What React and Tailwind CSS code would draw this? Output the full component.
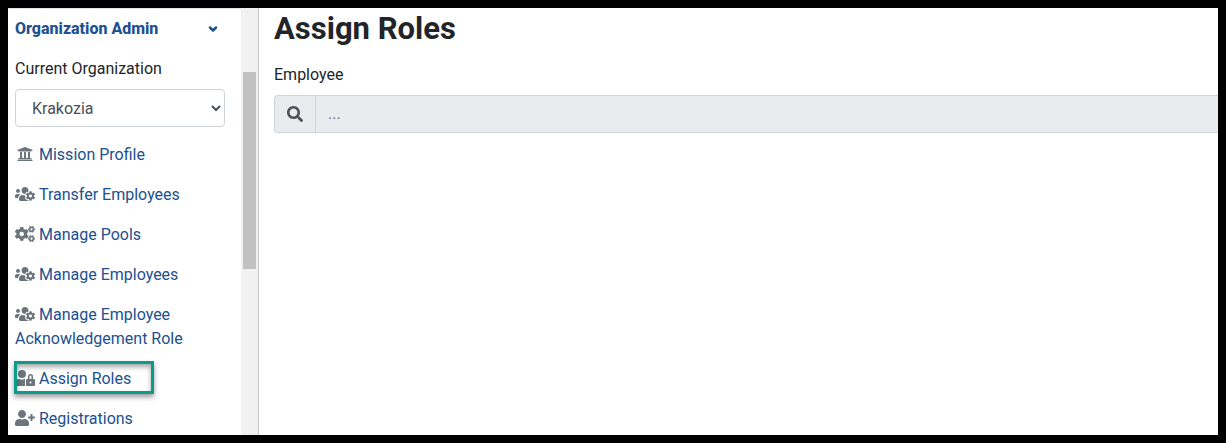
import { FaUniversity, FaUsersCog, FaCogs, FaUserLock, FaUserPlus, FaSearch } from 'react-icons/fa';
import { ChevronDown } from 'lucide-react';

const links = [
  { label: 'Mission Profile', icon: FaUniversity },
  { label: 'Transfer Employees', icon: FaUsersCog },
  { label: 'Manage Pools', icon: FaCogs },
  { label: 'Manage Employees', icon: FaUsersCog },
  { label: 'Manage Employee Acknowledgement Role', icon: FaUsersCog },
  { label: 'Assign Roles', icon: FaUserLock, active: true },
  { label: 'Registrations', icon: FaUserPlus },
];

const SidebarLink = ({ label, icon: Icon, active }) => (
  <li className="relative py-2">
    <a href="#" className="block text-[#20508f] hover:underline">
      <Icon className="inline-block h-4 w-5 mr-1 align-[-2px] text-[#6c757d]" />
      {label}
    </a>
    {/* Highlight around the current page */}
    {active && (
      <span className="pointer-events-none absolute -left-px top-0.5 h-[33px] w-[140px] border-3 border-[#0a9b8a] shadow-[0_3px_5px_rgba(0,0,0,0.4),inset_0_3px_5px_rgba(0,0,0,0.35)]" />
    )}
  </li>
);

const Sidebar = () => (
  <aside className="flex w-[251px] shrink-0 border-r border-[#c8c8c8]">
    <nav className="min-w-0 flex-1 overflow-hidden border-t border-[#dee2e6] pl-[7px] pr-4">
      <button type="button" className="flex w-full items-center justify-between py-2 pr-1.5 font-extrabold text-[#20508f]">
        Organization Admin
        <ChevronDown className="h-3 w-3" strokeWidth={5} />
      </button>
      <label htmlFor="organization" className="block py-2">Current Organization</label>
      <select
        id="organization"
        className="block h-[38px] w-full rounded border border-[#ced4da] bg-white pl-3 text-[#495057]"
      >
        <option>Krakozia</option>
      </select>
      <ul className="pt-2">
        {links.map((link) => (
          <SidebarLink key={link.label} {...link} />
        ))}
      </ul>
    </nav>
    {/* Scrollbar */}
    <div className="w-[17px] shrink-0 bg-[#f1f1f1] px-0.5 pt-16">
      <div className="h-[197px] w-[13px] bg-[#c1c1c1]" />
    </div>
  </aside>
);

const AssignRoles = () => (
  <main className="min-w-0 flex-1 pl-[15px]">
    <h1 className="pt-px text-[31px] font-bold leading-10">Assign Roles</h1>
    <label htmlFor="employee" className="mt-3.5 mb-2 block">Employee</label>
    <div className="flex h-[38px] rounded-l border border-r-0 border-[#ced4da] bg-[#e9ecef]">
      <span className="flex w-[41px] shrink-0 items-center justify-center border-r border-[#ced4da] text-[#495057]">
        <FaSearch className="h-4 w-4" />
      </span>
      <input
        id="employee"
        type="text"
        placeholder="..."
        disabled
        className="min-w-0 flex-1 bg-transparent px-3 placeholder:text-[#6c757d]"
      />
    </div>
  </main>
);

export default function App() {
  return (
    <div className="flex h-screen overflow-hidden border-8 border-black bg-white font-[Roboto,sans-serif] text-base text-[#212529]">
      <Sidebar />
      <AssignRoles />
    </div>
  );
}
